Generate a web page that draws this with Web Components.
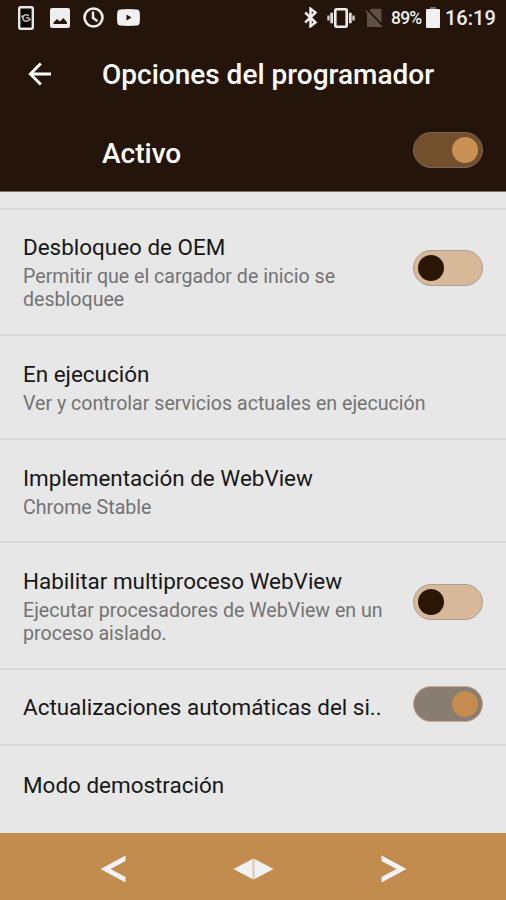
<!DOCTYPE html>
<html lang="es">
<head>
<meta charset="utf-8">
<title>Opciones del programador</title>
<style>
  body {
    margin: 0;
    background: #e7e7e7;
    font-family: Roboto, "Liberation Sans", sans-serif;
  }
</style>
</head>
<body>
<developer-options></developer-options>

<script>
const ICONS = {
  phone: { w: 16, h: 24, body: `
    <rect x="1.2" y="1.2" width="13.6" height="21.6" rx="1.6" fill="#0a0401" stroke="#e6e6e6" stroke-width="2.4"/>
    <path d="M3.4 10.5h2M10.6 13.5h2" stroke="#ccc" stroke-width="2"/>
    <path d="M10.8 10A3.3 3.3 0 1 0 10.8 14M8 12h3.5" fill="none" stroke="#bbb" stroke-width="1.6"/>` },
  image: { w: 20, h: 20, body: `
    <rect width="20" height="20" rx="2.2" fill="#efefef"/>
    <path d="M3.5 16v-1.5l3.5-3.5 2.8 2.5 3.7-3.5 3.5 4.5V16z" fill="#251508"/>` },
  clock: { w: 21, h: 21, body: `
    <circle cx="10.5" cy="10.5" r="9" fill="none" stroke="#eee" stroke-width="2.6"/>
    <path d="M10 4.5v6.3l4.5 3.5" fill="none" stroke="#eee" stroke-width="2.4"/>` },
  video: { w: 23, h: 17, body: `
    <path d="M3 .4Q11.5-.4 20 .4q2.5.2 2.7 2.8.5 5.3 0 10.6-.2 2.6-2.7 2.8-8.5.8-17 0-2.5-.2-2.7-2.8-.5-5.3 0-10.6Q.5.6 3 .4z" fill="#f1f1f1"/>
    <path d="M9.5 5.5l5 3-5 3z" fill="#251508"/>` },
  bluetooth: { w: 14, h: 21, body: `
    <path d="M1.2 5.5l10.3 10-5 3.8V1.7l5 3.8-10.3 10" fill="none" stroke="#eee" stroke-width="2.5"/>` },
  vibrate: { w: 28, h: 20, body: `
    <rect x="8.3" y="1.3" width="11.4" height="17.4" rx="1" fill="none" stroke="#eee" stroke-width="2.6"/>
    <path d="M1.5 7.5v5M26.5 7.5v5" stroke="#ccc" stroke-width="2.4"/>
    <path d="M4.7 4.7v10.6M23.3 4.7v10.6" stroke="#ddd" stroke-width="2.8"/>` },
  nosim: { w: 18, h: 20, body: `
    <path d="M6.5.8H16.5V19H2V5.5z" fill="#5e5045"/>
    <path d="M1.5 1L17.5 17.5" stroke="#251409" stroke-width="2"/>
    <path d="M.7 2.5L16.5 19" stroke="#67594e" stroke-width="1.3"/>` },
  battery: { w: 14, h: 21, body: `
    <path d="M4 0h6v3H4z" fill="#756c65"/>
    <rect y="2" width="14" height="19" rx="1" fill="#f1f1f1"/>` },
  back: { w: 24, h: 24, body: `
    <path d="M12.8 1.5L2.4 12l10.4 10.5M2.4 12H23" fill="none" stroke="#fff" stroke-width="2.9"/>` },
  left: { w: 26, h: 28, body: `
    <path d="M25.5.5v5.6L10.5 14l15 8v5.5L.5 14z" fill="#f3f3f3"/>` },
  home: { w: 41, h: 22, body: `
    <path d="M.5 11L19.8.7v20.6z" fill="#f1f1f1"/>
    <path d="M40.5 11L21.2.7v20.6z" fill="#f1f1f1"/>
    <path d="M20.5.5v21" stroke="#d8c9b8" stroke-width="1.4"/>` },
  right: { w: 26, h: 28, body: `
    <path d="M.5.5v5.6L15.5 14l-15 8v5.5l25-13.5z" fill="#f3f3f3"/>` }
};

class UiIcon extends HTMLElement {
  connectedCallback() {
    this.attachShadow({ mode: 'open' });
    const icon = ICONS[this.getAttribute('name')];
    this.shadowRoot.innerHTML = `
      <style>
        :host { display: block; flex: none; }
        svg { display: block; }
      </style>
      <svg width="${icon.w}" height="${icon.h}" viewBox="0 0 ${icon.w} ${icon.h}" aria-hidden="true">${icon.body}</svg>
    `;
  }
}

class ToggleSwitch extends HTMLElement {
  connectedCallback() {
    this.attachShadow({ mode: 'open' });
    this.shadowRoot.innerHTML = `
      <style>
        :host {
          display: flex;
          flex: none;
          align-items: center;
          box-sizing: border-box;
          width: 70px;
          height: 36px;
          padding: 0 4px;
          border: 1px solid #aaa096;
          border-radius: 18px;
          background: #d7b898;
        }
        .thumb {
          width: 26px;
          height: 26px;
          border-radius: 50%;
          background: #2b1605;
        }
        :host([checked]) {
          justify-content: flex-end;
          border-color: #c9aa8b;
          background: #897c70;
        }
        :host([checked]) .thumb { background: #c48c50; }
        :host([tone="dark"]) {
          border-color: #75675a;
          background: #73502c;
        }
        :host([tone="dark"]) .thumb { background: #ca9155; }
      </style>
      <div class="thumb"></div>
    `;
  }
}

class StatusBar extends HTMLElement {
  connectedCallback() {
    this.attachShadow({ mode: 'open' });
    this.shadowRoot.innerHTML = `
      <style>
        :host {
          display: flex;
          align-items: center;
          box-sizing: border-box;
          height: 35px;
          padding: 0 10px 0 18px;
          color: #eee;
        }
        .left { display: flex; align-items: center; gap: 13px; flex: 1; }
        .right { display: flex; align-items: center; }
        .percent {
          margin: 1px 4px 0 8px;
          width: 31px;
          font-size: 17.5px;
          line-height: 20px;
          letter-spacing: -0.8px;
          white-space: nowrap;
        }
        .time {
          width: 51px;
          margin: 1px 0 0 5px;
          font-size: 20px;
          font-weight: 500;
          line-height: 24px;
          white-space: nowrap;
        }
      </style>
      <div class="left">
        <ui-icon name="phone"></ui-icon>
        <ui-icon name="image" style="margin-left:3px"></ui-icon>
        <ui-icon name="clock"></ui-icon>
        <ui-icon name="video"></ui-icon>
      </div>
      <div class="right">
        <ui-icon name="bluetooth"></ui-icon>
        <ui-icon name="vibrate" style="margin-left:9px"></ui-icon>
        <ui-icon name="nosim" style="margin-left:10px"></ui-icon>
        <span class="percent">89%</span>
        <ui-icon name="battery"></ui-icon>
        <span class="time">16:19</span>
      </div>
    `;
  }
}

class AppHeader extends HTMLElement {
  connectedCallback() {
    this.attachShadow({ mode: 'open' });
    this.shadowRoot.innerHTML = `
      <style>
        :host {
          display: block;
          box-sizing: border-box;
          height: 192px;
          background: #251409;
          border-bottom: 1px solid #75706c;
          color: #fff;
          font-size: 28px;
          font-weight: 500;
        }
        .bar { display: flex; align-items: center; height: 79px; }
        .bar ui-icon { margin: 0 50px 2px 28px; }
        .title { white-space: nowrap; }
        .master {
          display: flex;
          align-items: center;
          justify-content: space-between;
          height: 72px;
          padding: 0 23px 0 102px;
        }
        .master span { margin-top: 6px; }
      </style>
      <status-bar></status-bar>
      <div class="bar">
        <ui-icon name="back"></ui-icon>
        <span class="title"><slot name="title"></slot></span>
      </div>
      <div class="master">
        <span><slot name="state"></slot></span>
        <toggle-switch checked tone="dark"></toggle-switch>
      </div>
    `;
  }
}

class OptionRow extends HTMLElement {
  connectedCallback() {
    this.attachShadow({ mode: 'open' });
    this.shadowRoot.innerHTML = `
      <style>
        :host {
          display: flex;
          align-items: center;
          justify-content: space-between;
          box-sizing: border-box;
          padding: 0 23px;
          border-top: 2px solid #d7d7d7;
          color: #171717;
        }
        .title {
          font-size: 22.45px;
          line-height: 30px;
          white-space: nowrap;
        }
        ::slotted([slot="summary"]) {
          display: block;
          margin-top: 3px;
          color: #737373;
          font-size: 19.6px;
          line-height: 23px;
          white-space: nowrap;
        }
        ::slotted([slot="control"]) { margin-bottom: 7px; }
      </style>
      <div>
        <div class="title"><slot></slot></div>
        <slot name="summary"></slot>
      </div>
      <slot name="control"></slot>
    `;
  }
}

class NavBar extends HTMLElement {
  connectedCallback() {
    this.attachShadow({ mode: 'open' });
    this.shadowRoot.innerHTML = `
      <style>
        :host {
          display: flex;
          align-items: center;
          justify-content: space-between;
          box-sizing: border-box;
          height: 67px;
          padding: 5px 99px 0 100px;
          background: #c28c4f;
        }
      </style>
      <ui-icon name="left"></ui-icon>
      <ui-icon name="home"></ui-icon>
      <ui-icon name="right"></ui-icon>
    `;
  }
}

class DeveloperOptions extends HTMLElement {
  connectedCallback() {
    this.attachShadow({ mode: 'open' });
    this.shadowRoot.innerHTML = `
      <style>
        :host {
          display: flex;
          flex-direction: column;
          width: 506px;
          height: 900px;
          overflow: hidden;
        }
        .list {
          display: grid;
          grid-template-rows: 126px 104px 103px 127px 76px 89px;
          flex: 1;
          padding-top: 16px;
        }
        .list option-row:first-child { padding-bottom: 1px; }
        .list option-row:last-child { padding-bottom: 9px; }
      </style>
      <app-header>
        <span slot="title">Opciones del programador</span>
        <span slot="state">Activo</span>
      </app-header>
      <div class="list">
        <option-row>
          Desbloqueo de OEM
          <span slot="summary">Permitir que el cargador de inicio se<br>desbloquee</span>
          <toggle-switch slot="control"></toggle-switch>
        </option-row>
        <option-row>
          En ejecución
          <span slot="summary">Ver y controlar servicios actuales en ejecución</span>
        </option-row>
        <option-row>
          Implementación de WebView
          <span slot="summary">Chrome Stable</span>
        </option-row>
        <option-row>
          Habilitar multiproceso WebView
          <span slot="summary">Ejecutar procesadores de WebView en un<br>proceso aislado.</span>
          <toggle-switch slot="control"></toggle-switch>
        </option-row>
        <option-row>
          Actualizaciones automáticas del si..
          <toggle-switch slot="control" checked></toggle-switch>
        </option-row>
        <option-row>Modo demostración</option-row>
      </div>
      <nav-bar></nav-bar>
    `;
  }
}

customElements.define('ui-icon', UiIcon);
customElements.define('toggle-switch', ToggleSwitch);
customElements.define('status-bar', StatusBar);
customElements.define('app-header', AppHeader);
customElements.define('option-row', OptionRow);
customElements.define('nav-bar', NavBar);
customElements.define('developer-options', DeveloperOptions);
</script>
</body>
</html>
